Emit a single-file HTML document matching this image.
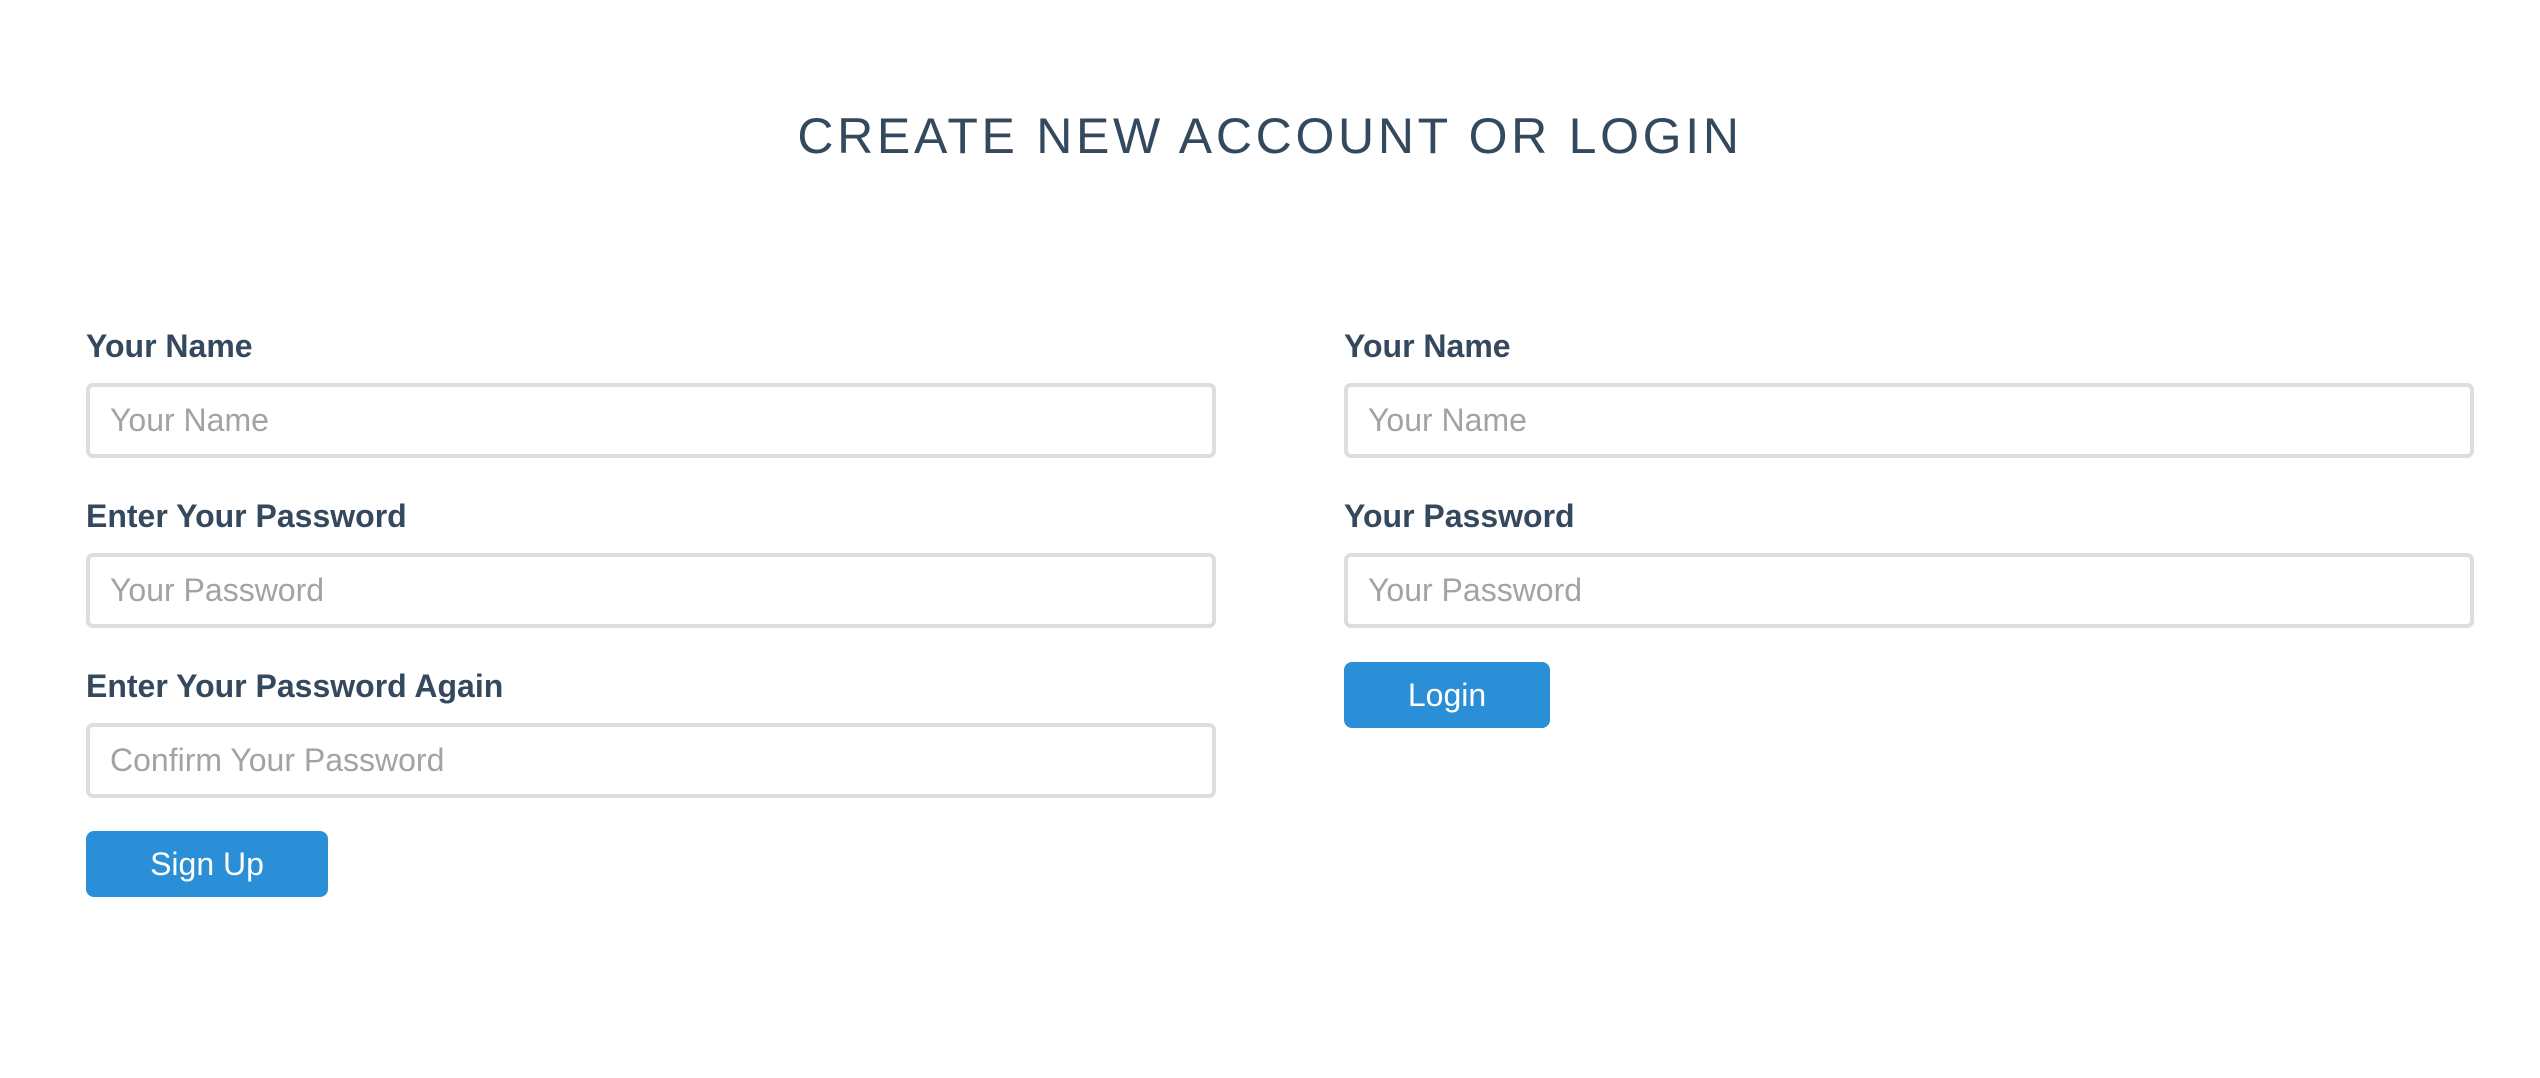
<!DOCTYPE html>
<html><head><meta charset="utf-8"><style>
*{box-sizing:border-box;margin:0;padding:0}
body{width:2540px;height:1078px;background:#fff;font-family:"Liberation Sans",Arial,sans-serif;position:relative;overflow:hidden}
h1{position:absolute;top:108px;left:0;width:2540px;text-align:center;font-weight:normal;font-size:50px;letter-spacing:3.7px;color:#34495e;line-height:56px}
.lab{position:absolute;font-weight:bold;font-size:32px;color:#34495e;line-height:34px}
.inp{position:absolute;height:75px;border:4px solid #dddddd;border-radius:7px;color:#a3a3a3;font-size:32px;line-height:67px;padding-left:20px}
.btn{position:absolute;background:#2a8fd6;border-radius:8px;color:#fff;font-size:32px;text-align:center;line-height:66px;height:66px}
</style></head><body>
<h1>CREATE NEW ACCOUNT OR LOGIN</h1>

<div class="lab" style="left:86px;top:329px">Your Name</div>
<div class="inp" style="left:86px;top:383px;width:1130px">Your Name</div>
<div class="lab" style="left:86px;top:499px">Enter Your Password</div>
<div class="inp" style="left:86px;top:553px;width:1130px">Your Password</div>
<div class="lab" style="left:86px;top:669px">Enter Your Password Again</div>
<div class="inp" style="left:86px;top:723px;width:1130px">Confirm Your Password</div>
<div class="btn" style="left:86px;top:831px;width:242px">Sign Up</div>

<div class="lab" style="left:1344px;top:329px">Your Name</div>
<div class="inp" style="left:1344px;top:383px;width:1130px">Your Name</div>
<div class="lab" style="left:1344px;top:499px">Your Password</div>
<div class="inp" style="left:1344px;top:553px;width:1130px">Your Password</div>
<div class="btn" style="left:1344px;top:662px;width:206px">Login</div>
</body></html>
